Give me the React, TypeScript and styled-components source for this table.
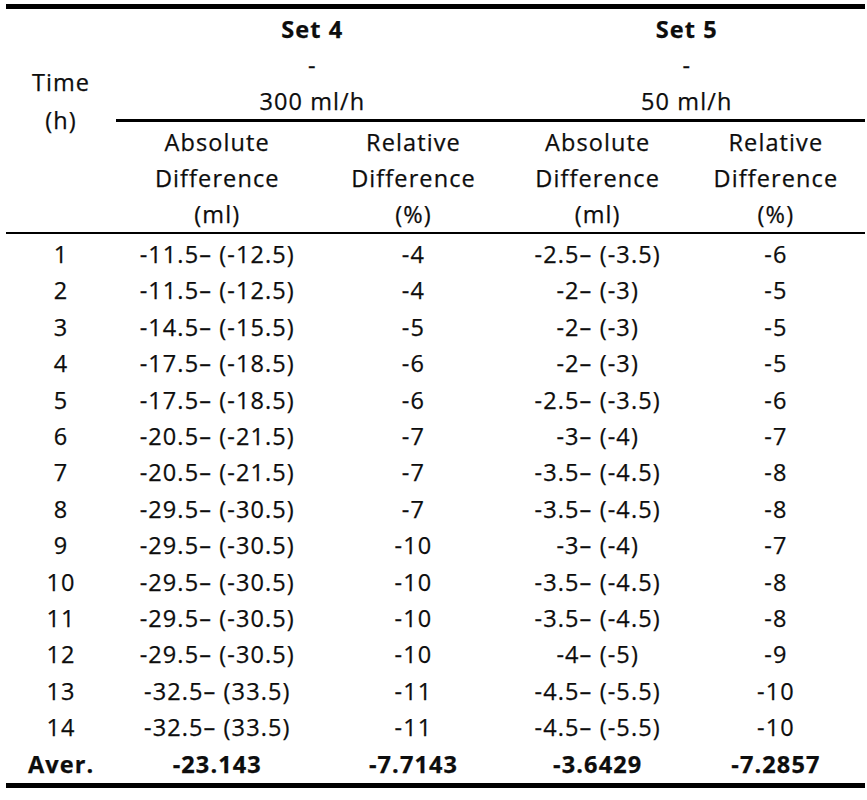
import styled, { createGlobalStyle } from "styled-components";

const GlobalStyle = createGlobalStyle`
  html, body {
    margin: 0;
    padding: 0;
    background: #ffffff;
  }
`;

type Row = [string, string, string, string, string];

const rows: Row[] = [
  ["1", "-11.5– (-12.5)", "-4", "-2.5– (-3.5)", "-6"],
  ["2", "-11.5– (-12.5)", "-4", "-2– (-3)", "-5"],
  ["3", "-14.5– (-15.5)", "-5", "-2– (-3)", "-5"],
  ["4", "-17.5– (-18.5)", "-6", "-2– (-3)", "-5"],
  ["5", "-17.5– (-18.5)", "-6", "-2.5– (-3.5)", "-6"],
  ["6", "-20.5– (-21.5)", "-7", "-3– (-4)", "-7"],
  ["7", "-20.5– (-21.5)", "-7", "-3.5– (-4.5)", "-8"],
  ["8", "-29.5– (-30.5)", "-7", "-3.5– (-4.5)", "-8"],
  ["9", "-29.5– (-30.5)", "-10", "-3– (-4)", "-7"],
  ["10", "-29.5– (-30.5)", "-10", "-3.5– (-4.5)", "-8"],
  ["11", "-29.5– (-30.5)", "-10", "-3.5– (-4.5)", "-8"],
  ["12", "-29.5– (-30.5)", "-10", "-4– (-5)", "-9"],
  ["13", "-32.5– (33.5)", "-11", "-4.5– (-5.5)", "-10"],
  ["14", "-32.5– (33.5)", "-11", "-4.5– (-5.5)", "-10"],
];

const average: Row = ["Aver.", "-23.143", "-7.7143", "-3.6429", "-7.2857"];

const sets = [
  { name: "Set 4", rate: "300 ml/h" },
  { name: "Set 5", rate: "50 ml/h" },
];

const App = () => {
  return (
    <Page>
      <GlobalStyle />
      <Table>
        <colgroup>
          <col style={{ width: 110 }} />
          <col style={{ width: 202 }} />
          <col style={{ width: 190 }} />
          <col style={{ width: 178 }} />
          <col style={{ width: 178 }} />
        </colgroup>
        <thead>
          <tr>
            <TimeCell rowSpan={2}>
              Time
              <br />
              (h)
            </TimeCell>
            {sets.map((set) => (
              <SetCell key={set.name} colSpan={2}>
                <Bold>{set.name}</Bold>
                <br />-<br />
                {set.rate}
              </SetCell>
            ))}
          </tr>
          <tr>
            {sets.map((set) => [
              <ColCell key={set.name + "abs"}>
                Absolute
                <br />
                Difference
                <br />
                (ml)
              </ColCell>,
              <ColCell key={set.name + "rel"}>
                Relative
                <br />
                Difference
                <br />
                (%)
              </ColCell>,
            ])}
          </tr>
        </thead>
        <tbody>
          {rows.map((row, i) => (
            <BodyRow key={row[0]} $first={i === 0}>
              {row.map((value, j) => (
                <Cell key={j}>{value}</Cell>
              ))}
            </BodyRow>
          ))}
          <AverageRow>
            {average.map((value, j) => (
              <Cell key={j} $bold>
                {value}
              </Cell>
            ))}
          </AverageRow>
        </tbody>
      </Table>
    </Page>
  );
};

export default App;

const Page = styled.div`
  width: 867px;
  height: 800px;
  box-sizing: border-box;
  padding: 4px 2px 0 6px;
  overflow: hidden;
  font-family: "Open Sans", "Liberation Sans", sans-serif;
  font-size: 23.5px;
  letter-spacing: 1.1px;
  color: #0d0d0d;
  -webkit-text-stroke: 0.25px #0d0d0d;
`;

const Table = styled.table`
  width: 859px;
  table-layout: fixed;
  border-collapse: collapse;
  border-top: 5px solid #000;
  border-bottom: 5px solid #000;

  td,
  th {
    padding: 0;
    text-align: center;
    white-space: nowrap;
    font-weight: 400;
  }
`;

const TimeCell = styled.th`
  vertical-align: top;
  padding-top: 54px !important;
  line-height: 38px;
  border-bottom: 2px solid #000;
`;

const SetCell = styled.th`
  vertical-align: top;
  padding-top: 2px !important;
  line-height: 36px;
  border-bottom: 3px solid #000;
`;

const Bold = styled.span`
  font-weight: 700;
`;

const ColCell = styled.th`
  vertical-align: top;
  padding-top: 2px !important;
  line-height: 36px;
  border-bottom: 2px solid #000;
`;

const BodyRow = styled.tr<{ $first?: boolean }>`
  height: ${(p) => (p.$first ? "39.4px" : "36.4px")};

  td {
    vertical-align: ${(p) => (p.$first ? "bottom" : "middle")};
    line-height: 36.4px;
  }
`;

const AverageRow = styled.tr`
  height: 40px;

  td {
    vertical-align: middle;
    line-height: 36px;
    padding-top: 0;
  }
`;

const Cell = styled.td<{ $bold?: boolean }>`
  font-weight: ${(p) => (p.$bold ? 700 : 400)} !important;
`;
